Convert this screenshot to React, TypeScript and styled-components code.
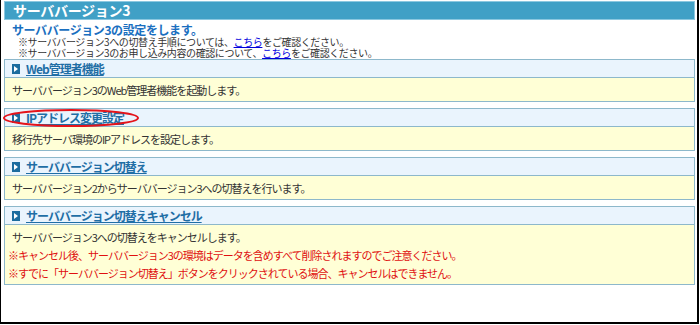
import React from "react";
import styled, { createGlobalStyle } from "styled-components";

const GlobalStyle = createGlobalStyle`
  html, body {
    margin: 0;
    padding: 0;
    background: #ffffff;
  }
  body {
    font-family: "Noto Sans CJK JP", "Liberation Sans", sans-serif;
  }
`;

// outer frame, black lines on three sides
const Frame = styled.div`
  box-sizing: border-box;
  width: 699px;
  height: 324px;
  border-left: 1px solid #000;
  border-right: 2px solid #000;
  border-bottom: 2px solid #000;
  padding: 1px 2px 0 3px;
  background: #fff;
`;

const TitleBar = styled.div`
  box-sizing: border-box;
  height: 19px;
  background: #40a0c6;
  border: 1px solid #8cc8e0;
  color: #fff;
  font-size: 14px;
  font-weight: bold;
  line-height: 17px;
  padding-left: 8px;
  letter-spacing: -0.3px;
`;

const Lead = styled.div`
  padding: 2px 0 0 8px;
`;

const LeadTitle = styled.div`
  color: #1a6fc0;
  font-size: 12px;
  font-weight: bold;
  line-height: 15px;
  letter-spacing: -0.4px;
`;

const Note = styled.div`
  color: #333;
  font-size: 10px;
  line-height: 10.5px;
  padding-left: 6px;
  letter-spacing: -0.4px;
`;

const NoteLink = styled.a`
  color: #0000dd;
  text-decoration: underline;
`;

const Sections = styled.div`
  display: flex;
  flex-direction: column;
  gap: 6px;
  margin-top: 1px;
`;

const Section = styled.div`
  position: relative;
  border: 1px solid #8db8cb;
`;

const SectionHead = styled.div`
  display: flex;
  align-items: center;
  gap: 6px;
  height: 17px;
  background: #eaf4fd;
  border-bottom: 1px solid #8db8cb;
  padding-left: 7px;
`;

const Marker = styled.span`
  display: flex;
  align-items: center;
  justify-content: center;
  width: 8px;
  height: 10px;
  background: #1b6c9f;
`;

const HeadLink = styled.a`
  color: #1f6ea5;
  font-size: 12px;
  font-weight: bold;
  line-height: 16px;
  text-decoration: underline;
  letter-spacing: -1px;
`;

const SectionBody = styled.div`
  background: #ffffd6;
  padding: 3px 7px 2px;
  font-size: 11px;
  line-height: 18px;
  color: #333;
  letter-spacing: -1px;
`;

const Warn = styled.div`
  color: #e01010;
  margin-left: -4px;
`;

const Circle = styled.svg`
  position: absolute;
  left: -2px;
  top: -1px;
  overflow: visible;
  pointer-events: none;
`;

const Arrow = () => (
  <Marker>
    <svg width="4" height="6" viewBox="0 0 4 6">
      <path d="M0 0 L4 3 L0 6 Z" fill="#fff" />
    </svg>
  </Marker>
);

interface Item {
  title: string;
  lines: string[];
  warnings?: string[];
  circled?: boolean;
}

const items: Item[] = [
  { title: "Web管理者機能", lines: ["サーババージョン3のWeb管理者機能を起動します。"] },
  {
    title: "IPアドレス変更設定",
    lines: ["移行先サーバ環境のIPアドレスを設定します。"],
    circled: true,
  },
  {
    title: "サーババージョン切替え",
    lines: ["サーババージョン2からサーババージョン3への切替えを行います。"],
  },
  {
    title: "サーババージョン切替えキャンセル",
    lines: ["サーババージョン3への切替えをキャンセルします。"],
    warnings: [
      "※キャンセル後、サーババージョン3の環境はデータを含めすべて削除されますのでご注意ください。",
      "※すでに「サーババージョン切替え」ボタンをクリックされている場合、キャンセルはできません。",
    ],
  },
];

export default function App() {
  return (
    <>
      <GlobalStyle />
      <Frame>
        <TitleBar>サーババージョン3</TitleBar>
        <Lead>
          <LeadTitle>サーババージョン3の設定をします。</LeadTitle>
          <Note>
            ※サーババージョン3への切替え手順については、<NoteLink href="#">こちら</NoteLink>をご確認ください。
          </Note>
          <Note>
            ※サーババージョン3のお申し込み内容の確認について、<NoteLink href="#">こちら</NoteLink>をご確認ください。
          </Note>
        </Lead>
        <Sections>
          {items.map((item) => (
            <Section key={item.title}>
              <SectionHead>
                <Arrow />
                <HeadLink href="#">{item.title}</HeadLink>
              </SectionHead>
              <SectionBody>
                {item.lines.map((l) => (
                  <div key={l}>{l}</div>
                ))}
                {item.warnings?.map((w) => (
                  <Warn key={w}>{w}</Warn>
                ))}
              </SectionBody>
              {item.circled && (
                <Circle width="138" height="20" viewBox="0 0 138 20">
                  <ellipse cx="68" cy="10" rx="67" ry="8" fill="none" stroke="#e4141b" strokeWidth="2" />
                </Circle>
              )}
            </Section>
          ))}
        </Sections>
      </Frame>
    </>
  );
}
